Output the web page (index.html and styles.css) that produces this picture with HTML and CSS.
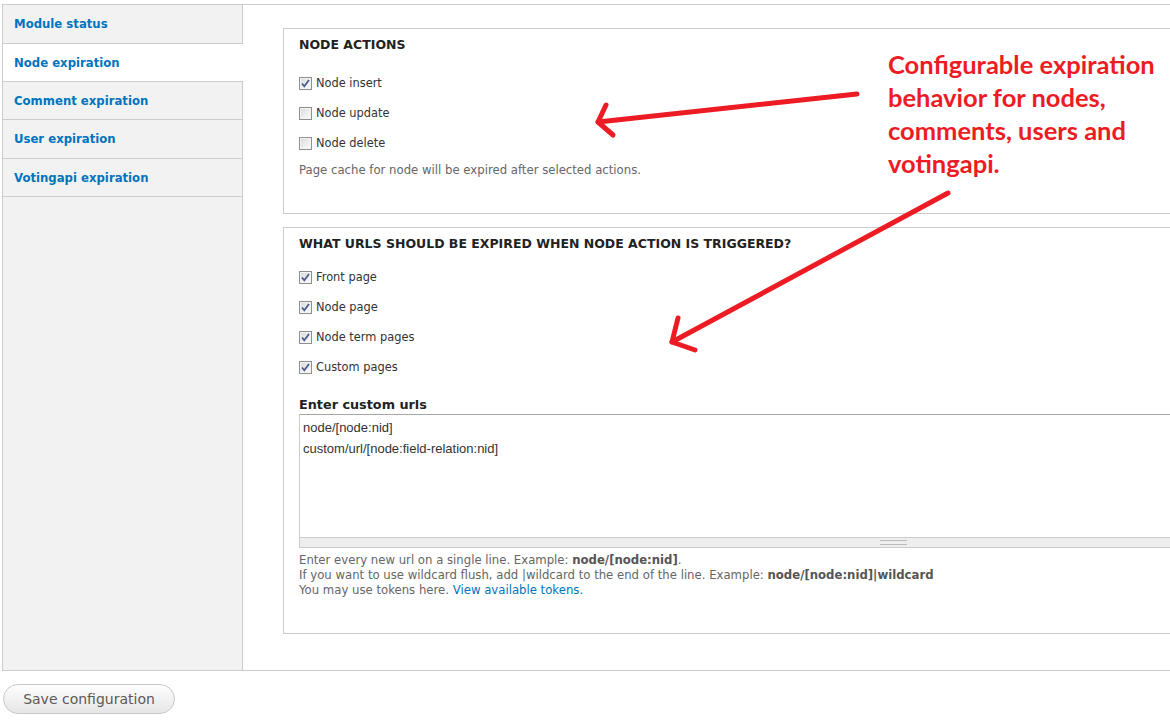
FILE: index.html
```html
<!DOCTYPE html>
<html lang="en">
<head>
<meta charset="utf-8">
<title>Expire settings</title>
<link rel="stylesheet" href="styles.css">
</head>
<body>
<div class="page">
  <form class="settings">
    <div class="vtabs">
      <ul class="vtabs-menu">
        <li class="vtab"><a href="#">Module status</a></li>
        <li class="vtab is-active"><a href="#">Node expiration</a></li>
        <li class="vtab"><a href="#">Comment expiration</a></li>
        <li class="vtab"><a href="#">User expiration</a></li>
        <li class="vtab"><a href="#">Votingapi expiration</a></li>
      </ul>
      <div class="vtabs-panes">
        <section class="fieldset fieldset-actions">
          <h2 class="legend">Node actions</h2>
          <div class="items">
            <label class="item"><span class="cb checked"><svg viewBox="0 0 11 11"><path d="M2 5.5 L4.3 8.3 L9 2" /></svg></span>Node insert</label>
            <label class="item"><span class="cb"></span>Node update</label>
            <label class="item"><span class="cb"></span>Node delete</label>
          </div>
          <p class="desc">Page cache for node will be expired after selected actions.</p>
        </section>

        <section class="fieldset fieldset-urls">
          <h2 class="legend">What URLs should be expired when node action is triggered?</h2>
          <div class="items">
            <label class="item"><span class="cb checked"><svg viewBox="0 0 11 11"><path d="M2 5.5 L4.3 8.3 L9 2" /></svg></span>Front page</label>
            <label class="item"><span class="cb checked"><svg viewBox="0 0 11 11"><path d="M2 5.5 L4.3 8.3 L9 2" /></svg></span>Node page</label>
            <label class="item"><span class="cb checked"><svg viewBox="0 0 11 11"><path d="M2 5.5 L4.3 8.3 L9 2" /></svg></span>Node term pages</label>
            <label class="item"><span class="cb checked"><svg viewBox="0 0 11 11"><path d="M2 5.5 L4.3 8.3 L9 2" /></svg></span>Custom pages</label>
          </div>
          <label class="field-label" for="custom-urls">Enter custom urls</label>
          <div class="textarea-wrap">
            <textarea id="custom-urls" class="textarea" readonly>node/[node:nid]
custom/url/[node:field-relation:nid]</textarea>
            <div class="grippie"><span class="grip"></span></div>
          </div>
          <div class="desc desc-lines">
            Enter every new url on a single line. Example: <strong>node/[node:nid]</strong>.<br>
            If you want to use wildcard flush, add |wildcard to the end of the line. Example: <strong>node/[node:nid]|wildcard</strong><br>
            You may use tokens here. <a href="#">View available tokens.</a>
          </div>
        </section>
      </div>
    </div>
    <div class="actions">
      <button type="button" class="button">Save configuration</button>
    </div>
  </form>

  <div class="note">Configurable expiration behavior for nodes, comments, users and votingapi.</div>
  <svg class="arrows" width="1170" height="723" viewBox="0 0 1170 723">
    <g fill="none" stroke="#ed1c24" stroke-width="5" stroke-linecap="round" stroke-linejoin="round">
      <path d="M857 94 L598 122" />
      <path d="M606 105 L598 122 L613 135" />
      <path d="M948 193 L672 342" />
      <path d="M678 318 L672 342 L695 350" />
    </g>
  </svg>
</div>
</body>
</html>
```

FILE: styles.css
```css
html, body {
  margin: 0;
  padding: 0;
  background: #fff;
  overflow: hidden;
}

body {
  font-family: "DejaVu Sans", Verdana, sans-serif;
  color: #333;
}

.page {
  position: relative;
  width: 1170px;
  height: 723px;
  padding: 4px 0 0 2px;
  box-sizing: border-box;
}

/* vertical tabs block */
.vtabs {
  display: flex;
  width: 1540px;
  border: 1px solid #ccc;
  background: #fff;
}

.vtabs-menu {
  list-style: none;
  margin: 0;
  padding: 0;
  width: 239px;
  flex: none;
  background: #f2f2f2;
  border-right: 1px solid #ccc;
}

.vtab {
  height: 37px;
  border-bottom: 1px solid #ccc;
  display: flex;
  align-items: center;
  padding-left: 11px;
}

.vtab:first-child,
.vtab:nth-child(4) {
  height: 38px;
}

.vtab a {
  font-size: 11.7px;
  font-weight: bold;
  color: #0074bd;
  text-decoration: none;
}

.vtab.is-active {
  background: #fff;
  margin-right: -1px;
}

.vtabs-panes {
  flex: 1;
  padding: 23px 40px 36px 40px;
}

/* fieldsets */
.fieldset {
  border: 1px solid #ccc;
  padding: 8px 15px 35px 15px;
}

.fieldset + .fieldset {
  margin-top: 13px;
}

.legend {
  margin: 0;
  font-size: 12.5px;
  line-height: 16px;
  font-weight: bold;
  text-transform: uppercase;
  color: #222;
}

.fieldset-actions .items {
  margin-top: 15px;
}

.fieldset-urls .items {
  margin-top: 10px;
}

.item {
  display: flex;
  align-items: center;
  height: 30px;
  font-size: 11.4px;
  color: #333;
}

.cb {
  width: 13px;
  height: 13px;
  box-sizing: border-box;
  border: 1px solid #8e8f8f;
  background: linear-gradient(135deg, #d8d8d8 0%, #f0f0f0 60%, #fbfbfb 100%);
  box-shadow: inset 0 0 0 1px #f4f4f4;
  margin-right: 4px;
  flex: none;
  display: flex;
  align-items: center;
  justify-content: center;
}

.cb svg {
  width: 11px;
  height: 11px;
}

.cb svg path {
  fill: none;
  stroke: #4a5e92;
  stroke-width: 1.8;
}

.desc {
  margin: 5px 0 0 0;
  font-size: 11.7px;
  line-height: 15px;
  color: #666;
}

.desc strong {
  color: #555;
}

.desc a {
  color: #0074bd;
  text-decoration: none;
}

.field-label {
  display: block;
  margin-top: 15px;
  font-size: 12.8px;
  line-height: 16px;
  font-weight: bold;
  color: #222;
}

.textarea-wrap {
  margin-top: 1px;
}

.textarea {
  display: block;
  width: 100%;
  height: 123px;
  box-sizing: border-box;
  margin: 0;
  padding: 2px 3px;
  border: 1px solid #ccc;
  border-top-color: #a6a6a6;
  border-bottom: none;
  font-family: "Liberation Sans", Arial, sans-serif;
  font-size: 13px;
  line-height: 21px;
  color: #333;
  resize: none;
  outline: none;
  overflow: hidden;
}

.grippie {
  height: 9px;
  background: #eee;
  border: 1px solid #ccc;
  display: flex;
  justify-content: center;
  align-items: center;
}

.grip {
  width: 27px;
  height: 3px;
  border-top: 1px solid #bbb;
  border-bottom: 1px solid #bbb;
}

.desc-lines {
  margin-top: 5px;
}

/* form actions */
.actions {
  margin-top: 13px;
  padding-left: 1px;
}

.button {
  width: 172px;
  height: 30px;
  border: 1px solid #c8c8c8;
  border-radius: 15px;
  background: linear-gradient(#fefefe, #e6e6e6);
  font-family: "DejaVu Sans", Verdana, sans-serif;
  font-size: 14px;
  color: #5a5a5a;
  padding: 0;
}

/* annotation overlay */
.note {
  position: absolute;
  left: 888px;
  top: 48px;
  width: 282px;
  font-family: Lato, "Open Sans", sans-serif;
  font-weight: bold;
  font-size: 25.5px;
  line-height: 33px;
  color: #ed1c24;
}

.arrows {
  position: absolute;
  left: 0;
  top: 0;
  pointer-events: none;
}
```
